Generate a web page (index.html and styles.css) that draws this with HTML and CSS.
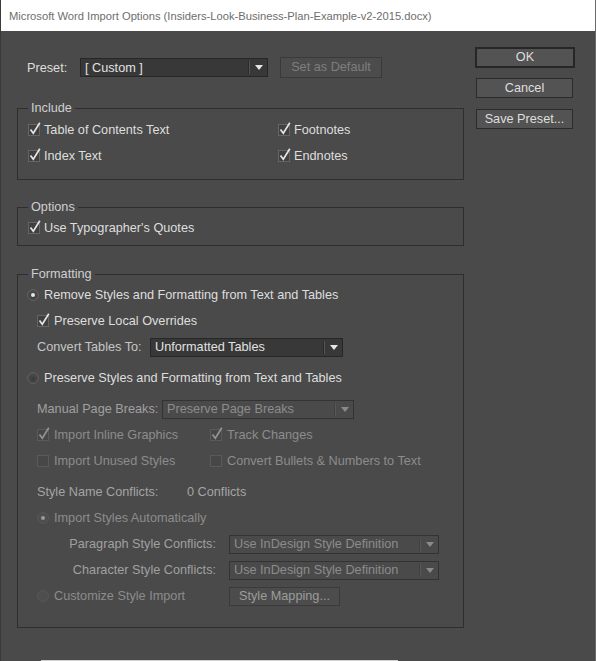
FILE: index.html
```html
<!DOCTYPE html>
<html lang="en">
<head>
    <meta charset="UTF-8">
    <title>Microsoft Word Import Options</title>
    <link rel="stylesheet" href="styles.css">
</head>
<body>
    <div class="titlebar">Microsoft Word Import Options (Insiders-Look-Business-Plan-Example-v2-2015.docx)</div>

    <div class="dialog">
        <div class="main">
            <div class="preset-row">
                <span class="preset-label">Preset:</span>
                <div class="select preset-select"><span class="value">[ Custom ]</span><span class="arrow"></span></div>
                <button class="btn btn-off set-default">Set as Default</button>
            </div>

            <fieldset class="group include">
                <legend>Include</legend>
                <div class="two-col">
                    <label class="row"><span class="box on"></span>Table of Contents Text</label>
                    <label class="row"><span class="box on"></span>Footnotes</label>
                    <label class="row"><span class="box on"></span>Index Text</label>
                    <label class="row"><span class="box on"></span>Endnotes</label>
                </div>
            </fieldset>

            <fieldset class="group options">
                <legend>Options</legend>
                <label class="row"><span class="box on"></span>Use Typographer's Quotes</label>
            </fieldset>

            <fieldset class="group formatting">
                <legend>Formatting</legend>
                <label class="row"><span class="radio on"></span>Remove Styles and Formatting from Text and Tables</label>
                <label class="row sub"><span class="box on"></span>Preserve Local Overrides</label>
                <div class="row sub">
                    <span class="field-label tables-label">Convert Tables To:</span>
                    <div class="select tables-select"><span class="value">Unformatted Tables</span><span class="arrow"></span></div>
                </div>
                <label class="row spaced"><span class="radio"></span>Preserve Styles and Formatting from Text and Tables</label>

                <div class="row sub spaced off">
                    <span class="field-label breaks-label">Manual Page Breaks:</span>
                    <div class="select select-off breaks-select"><span class="value">Preserve Page Breaks</span><span class="arrow"></span></div>
                </div>
                <div class="two-col sub off narrow">
                    <label class="row"><span class="box on"></span>Import Inline Graphics</label>
                    <label class="row"><span class="box on"></span>Track Changes</label>
                    <label class="row"><span class="box"></span>Import Unused Styles</label>
                    <label class="row"><span class="box"></span>Convert Bullets &amp; Numbers to Text</label>
                </div>

                <div class="row sub spaced conflicts">
                    <span class="conflict-label">Style Name Conflicts:</span>
                    <span>0 Conflicts</span>
                </div>
                <label class="row sub off"><span class="radio on"></span>Import Styles Automatically</label>
                <div class="row sub off">
                    <span class="map-label">Paragraph Style Conflicts:</span>
                    <div class="select select-off map-select"><span class="value">Use InDesign Style Definition</span><span class="arrow"></span></div>
                </div>
                <div class="row sub off">
                    <span class="map-label">Character Style Conflicts:</span>
                    <div class="select select-off map-select"><span class="value">Use InDesign Style Definition</span><span class="arrow"></span></div>
                </div>
                <div class="row sub off">
                    <label class="radio-label"><span class="radio"></span>Customize Style Import</label>
                    <button class="btn btn-off mapping">Style Mapping...</button>
                </div>
            </fieldset>
        </div>

        <div class="side">
            <button class="btn btn-default">OK</button>
            <button class="btn">Cancel</button>
            <button class="btn">Save Preset...</button>
        </div>
    </div>

    <div class="taskbar-edge"></div>
</body>
</html>
```

FILE: styles.css
```css
body {
    margin: 0;
    background: #4a4a4a;
    font-family: 'Liberation Sans', Arial, sans-serif;
    font-size: 12.7px;
    line-height: 16px;
    color: #dedede;
    width: 596px;
    height: 661px;
    overflow: hidden;
    box-sizing: border-box;
    border-right: 1px solid #6a6a6a;
    border-left: 1px solid #3c3a38;
}

.titlebar {
    height: 31px;
    background: #ffffff;
    color: #6e6e6e;
    padding-left: 8px;
    line-height: 32px;
    font-size: 11.2px;
    white-space: nowrap;
}

.dialog {
    display: flex;
    gap: 11px;
    padding-left: 16px;
    height: 629px;
}

.main {
    width: 447px;
}

/* preset row */
.preset-row {
    display: flex;
    align-items: center;
    height: 21px;
    margin-top: 26px;
}

.preset-label {
    width: 63px;
    padding-left: 10px;
    box-sizing: border-box;
}

.select {
    display: flex;
    align-items: center;
    height: 19px;
    box-sizing: border-box;
    background: #383838;
    border: 1px solid #272727;
    color: #e2e2e2;
}

.select .value {
    flex: 1;
    padding-left: 4px;
    white-space: nowrap;
    overflow: hidden;
}

.select .arrow {
    width: 17px;
    height: 13px;
    border-left: 1px solid #555;
    box-shadow: -1px 0 0 #2a2a2a;
    display: flex;
    align-items: center;
    justify-content: center;
}

.select .arrow::after {
    content: '';
    border-left: 4px solid transparent;
    border-right: 4px solid transparent;
    border-top: 5px solid #e6e6e6;
}

.select-off {
    background: #4a4a4a;
    border-color: #333;
    color: #8c8c8c;
}

.select-off .arrow {
    border-left-color: #585858;
    box-shadow: -1px 0 0 #404040;
}

.select-off .arrow::after {
    border-top-color: #8a8a8a;
}

.preset-select {
    width: 188px;
}

.btn {
    font-family: inherit;
    font-size: 12.7px;
    color: #dedede;
    background: #535353;
    border: 1px solid #2b2b2b;
    padding: 0;
    height: 20px;
    box-sizing: border-box;
    line-height: 17px;
}

.btn-off {
    background: #4c4c4c;
    border-color: #3a3a3a;
    color: #7e7e7e;
}

.set-default {
    width: 102px;
    height: 21px;
    margin-left: 12px;
}

/* group boxes */
.group {
    margin: 20px 0 0;
    padding: 0 10px;
    border: 1px solid #2e2e2e;
}

.group legend {
    padding: 0 3px;
    line-height: 16px;
    color: #cfcfcf;
}

.include {
    margin-top: 22px;
    padding-bottom: 10px;
}

.include .two-col {
    margin-top: 1px;
}

.options {
    margin-top: 19px;
    padding-bottom: 4px;
}

.formatting {
    margin-top: 20px;
    padding-bottom: 18px;
}

.row {
    display: flex;
    align-items: center;
    height: 26px;
    white-space: nowrap;
}

.two-col {
    display: grid;
    grid-template-columns: 250px auto;
}

.two-col.narrow {
    grid-template-columns: 173px auto;
}

.sub {
    padding-left: 9px;
}

.spaced {
    margin-top: 5px;
}

.off {
    color: #8c8c8c;
}

/* checkboxes and radios */
.box {
    position: relative;
    width: 10px;
    height: 10px;
    border: 1px solid #656565;
    background: #404040;
    margin-right: 4px;
    flex: none;
}

.sub .box {
    margin-right: 5px;
}

.box.on::after {
    content: '';
    position: absolute;
    left: 0;
    top: -3px;
    width: 12px;
    height: 13px;
    background: url("data:image/svg+xml,%3Csvg xmlns='http://www.w3.org/2000/svg' width='12' height='13'%3E%3Cpath d='M1.5 7.5 L4.3 11.3 L10.8 0.8' fill='none' stroke='%23e4e4e4' stroke-width='1.7'/%3E%3C/svg%3E") no-repeat;
}

.off .box {
    border-color: #5a5a5a;
    background: #474747;
}

.off .box.on::after {
    background: url("data:image/svg+xml,%3Csvg xmlns='http://www.w3.org/2000/svg' width='12' height='13'%3E%3Cpath d='M1.5 7.5 L4.3 11.3 L10.8 0.8' fill='none' stroke='%23939393' stroke-width='1.7'/%3E%3C/svg%3E") no-repeat;
}

.radio {
    position: relative;
    width: 10px;
    height: 10px;
    border-radius: 50%;
    border: 1px solid #5e5e5e;
    background: radial-gradient(circle at 50% 60%, #3a3a3a, #555);
    margin: 0 5px 0 -1px;
    flex: none;
}

.sub .radio {
    margin-left: 0;
}

.radio.on::after {
    content: '';
    position: absolute;
    left: 3px;
    top: 3px;
    width: 4px;
    height: 4px;
    border-radius: 50%;
    background: #e6e6e6;
}

.off .radio {
    border-color: #575757;
    background: #4e4e4e;
}

.off .radio.on::after {
    background: #9a9a9a;
}

/* formatting fields */
.field-label {
    color: #c6c6c6;
}

.off .field-label {
    color: #a0a0a0;
}

.tables-label {
    width: 113px;
}

.breaks-label {
    width: 125px;
}

.tables-select {
    width: 193px;
}

.breaks-select {
    width: 192px;
}

.conflicts {
    color: #a4a4a4;
}

.conflict-label {
    width: 150px;
}

.map-label {
    width: 179px;
    text-align: right;
    color: #a0a0a0;
}

.map-select {
    width: 210px;
    margin-left: 13px;
}

.radio-label {
    display: flex;
    align-items: center;
    width: 192px;
}

.mapping {
    width: 111px;
    height: 19px;
    color: #9c9c9c;
}

/* right-hand buttons */
.side {
    display: flex;
    flex-direction: column;
    padding-top: 16px;
    width: 100px;
}

.side .btn {
    width: 97px;
    height: 20px;
    margin-left: 1px;
    margin-bottom: 11px;
}

.side .btn-default {
    width: 100px;
    margin-left: 0;
    height: 21px;
    border: 2px solid #262626;
    margin-bottom: 10px;
}

.taskbar-edge {
    height: 1px;
    width: 357px;
    margin-left: 40px;
    background: #cfcfcf;
}
```
